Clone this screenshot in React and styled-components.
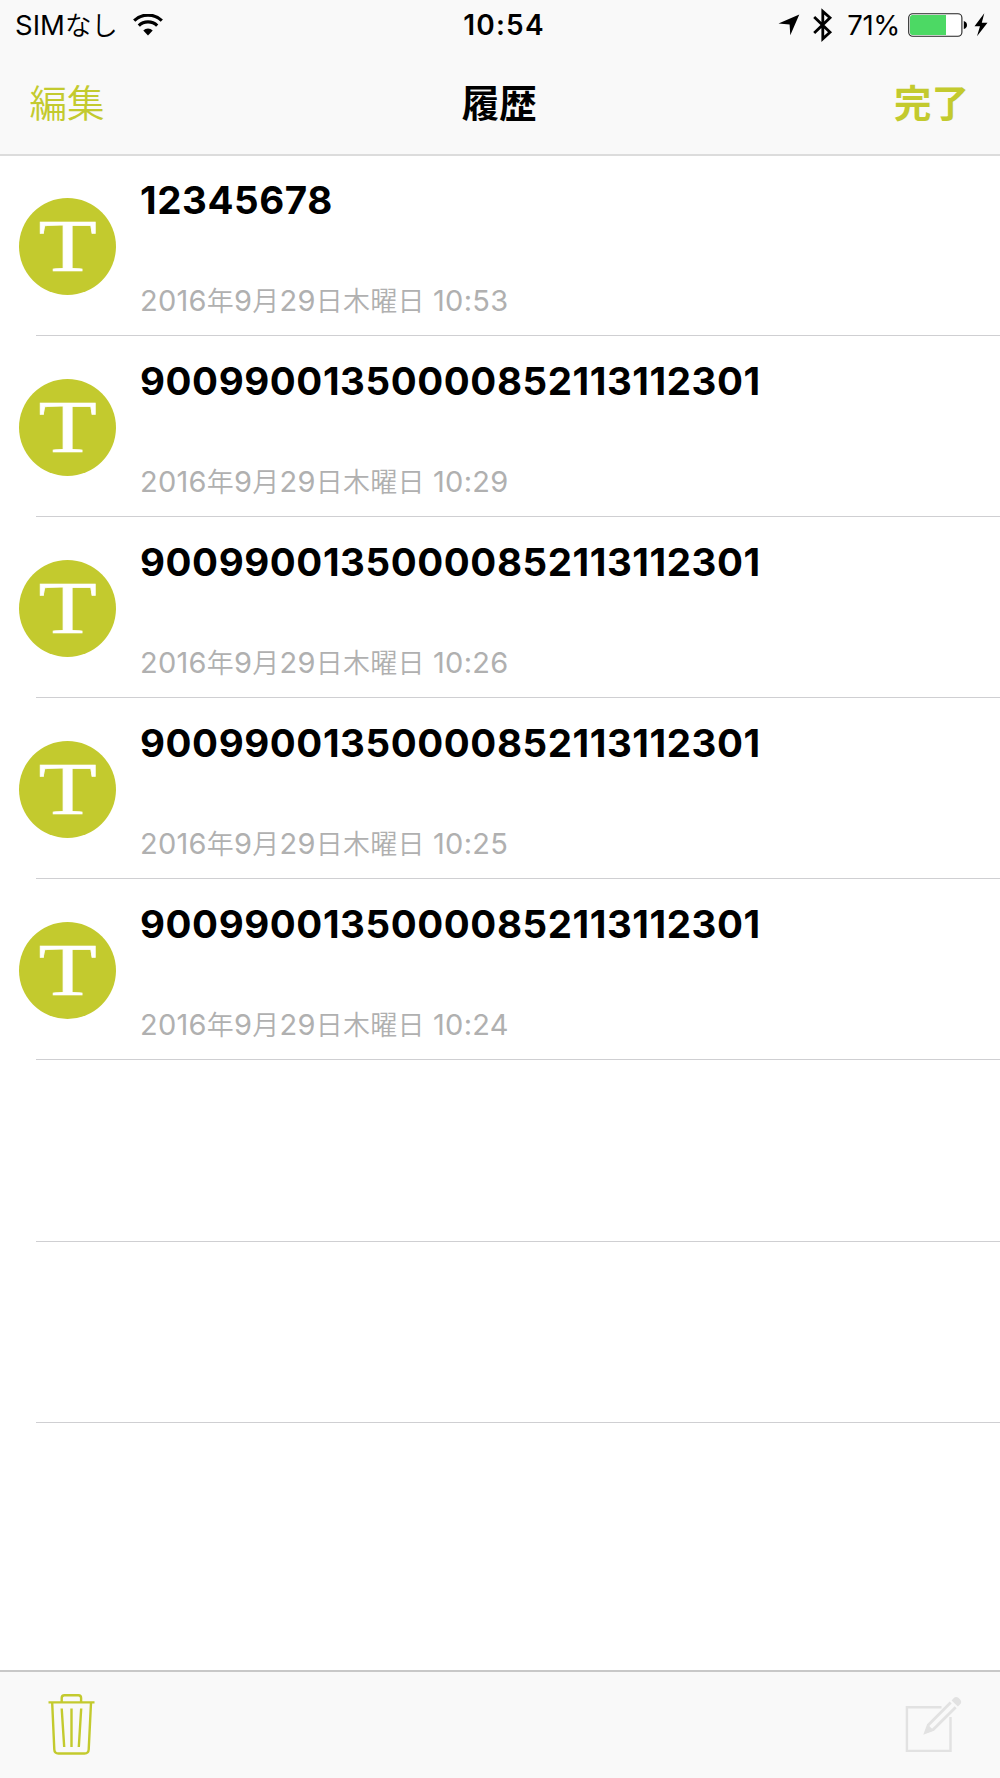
import styled, { createGlobalStyle } from "styled-components";

const history = [
  { id: 1, code: "12345678", time: "10:53" },
  { id: 2, code: "90099001350000852113112301", time: "10:29" },
  { id: 3, code: "90099001350000852113112301", time: "10:26" },
  { id: 4, code: "90099001350000852113112301", time: "10:25" },
  { id: 5, code: "90099001350000852113112301", time: "10:24" },
];

const WifiIcon = () => (
  <svg width="30" height="22" viewBox="0 0 30 22">
    <path d="M1.2 6.6a20 20 0 0 1 27.6 0" fill="none" stroke="#000" strokeWidth="3.2" />
    <path d="M5.8 11.6a13.3 13.3 0 0 1 18.4 0" fill="none" stroke="#000" strokeWidth="3.2" />
    <path d="M10.3 16.4a6.8 6.8 0 0 1 9.4 0L15 21.4z" />
  </svg>
);

const LocationIcon = () => (
  <svg width="22" height="22" viewBox="0 0 22 22">
    <path d="M21.3 .4L12.3 21.3L11.6 10.6L.5 9.6z" />
  </svg>
);

const BluetoothIcon = () => (
  <svg width="20" height="34" viewBox="0 0 20 34">
    <path
      d="M1.2 9L17 24.2L9.8 30.8V3.4L17 9.8L1.2 25"
      fill="none"
      stroke="#000"
      strokeWidth="2.8"
    />
  </svg>
);

const BatteryIcon = () => (
  <svg width="60" height="24" viewBox="0 0 60 24">
    <rect x=".7" y=".7" width="53.2" height="22.6" rx="4" fill="#fff" stroke="#222" strokeWidth="1.1" />
    <path d="M4.5 2H38v20H4.5a2.5 2.5 0 0 1-2.5-2.5v-15A2.5 2.5 0 0 1 4.5 2z" fill="#4cd964" />
    <path d="M55.8 8q3.2 1 3.2 4t-3.2 4z" />
  </svg>
);

const BoltIcon = () => (
  <svg width="14" height="24" viewBox="0 0 14 24">
    <path d="M10.3 .3L.5 13.3H6L3 23.3L13.5 9.7H7.8z" />
  </svg>
);

const TrashIcon = () => (
  <svg width="48" height="62" viewBox="0 0 48 62" fill="none" stroke="#c3ca2e" strokeWidth="2.4">
    <path d="M.5 9.4H46.5" />
    <path d="M13.7 9V5q0-2.7 2.7-2.7H30.4q2.7 0 2.7 2.7V9" />
    <path d="M4.2 10L6.3 56.5q.2 4 4.2 4H36.5q4 0 4.2-4L43 10" />
    <path d="M13.7 15.5L16.2 54M23.5 15.5V54M33.2 15.5L30.8 54" />
  </svg>
);

const ComposeIcon = () => (
  <svg width="58" height="62" viewBox="0 0 58 62">
    <path d="M36.5 14.2H1.9V57.9H45.5V24" fill="none" stroke="#e2e2e2" strokeWidth="2.4" />
    <path
      d="M45.7 9.6L23.3 32L20.6 39.4L28.3 36.6L50.7 14.2"
      fill="none"
      stroke="#e2e2e2"
      strokeWidth="2.8"
    />
    <path d="M19.7 40.2L22.6 31.4L28.9 37.4z" fill="#e2e2e2" />
    <path d="M46.6 7.4l2.2-2.4q2.3-2.2 4.8 0l1.5 1.5q2.2 2.5 0 4.8l-2.2 2.2z" fill="#e2e2e2" />
  </svg>
);

export default function App() {
  return (
    <>
      <GlobalStyle />
      <Screen>
        <Header>
          <StatusBar>
            <StatusLeft>
              <Carrier>
                SIM<Kana>なし</Kana>
              </Carrier>
              <WifiIcon />
            </StatusLeft>
            <Clock>10:54</Clock>
            <StatusRight>
              <LocationIcon />
              <BluetoothBox>
                <BluetoothIcon />
              </BluetoothBox>
              <Percent>71%</Percent>
              <BatteryIcon />
              <BoltBox>
                <BoltIcon />
              </BoltBox>
            </StatusRight>
          </StatusBar>
          <NavBar>
            <NavButton>編集</NavButton>
            <NavTitle>履歴</NavTitle>
            <NavButton $bold>完了</NavButton>
          </NavBar>
        </Header>
        <List>
          {history.map((item) => (
            <Row key={item.id}>
              <Badge>
                <Letter>T</Letter>
              </Badge>
              <RowBody>
                <Code>{item.code}</Code>
                <DateText>
                  2016<Kanji>年</Kanji>9<Kanji>月</Kanji>29<Kanji>日木曜日</Kanji> {item.time}
                </DateText>
              </RowBody>
            </Row>
          ))}
          <Row />
          <Row />
        </List>
        <Toolbar>
          <TrashIcon />
          <ComposeIcon />
        </Toolbar>
      </Screen>
    </>
  );
}

//Styled
const GlobalStyle = createGlobalStyle`
  * {
    box-sizing: border-box;
  }
  body {
    margin: 0;
    background: #fff;
    font-family: Inter, "Noto Sans CJK JP", sans-serif;
  }
  svg {
    display: block;
    flex-shrink: 0;
  }
`;
const Screen = styled.div`
  width: 1000px;
  height: 1778px;
  display: flex;
  flex-direction: column;
  overflow: hidden;
`;
const Header = styled.header`
  height: 156px;
  background: #f9f9f9;
  border-bottom: 2px solid #dcdcdc;
`;
const StatusBar = styled.div`
  height: 49px;
  display: grid;
  grid-template-columns: 1fr auto 1fr;
  align-items: center;
  padding: 0 12px 0 15px;
  font-size: 27.5px;
  color: #000;
`;
const StatusLeft = styled.div`
  display: flex;
  align-items: center;
  gap: 15px;
`;
const Carrier = styled.span`
  white-space: nowrap;
  line-height: 50px;
`;
const Kana = styled.span`
  font-size: 26.5px;
  font-weight: 350;
`;
const Clock = styled.span`
  margin-left: 5px;
  line-height: 50px;
  font-size: 28px;
  font-weight: 600;
  letter-spacing: 1.2px;
`;
const StatusRight = styled.div`
  display: flex;
  align-items: center;
  justify-content: flex-end;
`;
const BluetoothBox = styled.div`
  margin-left: 13px;
`;
const BoltBox = styled.div`
  margin-left: 6px;
`;
const Percent = styled.span`
  margin: 0 8px 0 14px;
  line-height: 50px;
  letter-spacing: -0.3px;
`;
const NavBar = styled.nav`
  height: 103px;
  display: grid;
  grid-template-columns: 1fr auto 1fr;
  align-items: center;
  padding: 0 31px 0 29.5px;
`;
const NavButton = styled.span`
  font-family: "Noto Sans CJK JP", sans-serif;
  font-size: 37.5px;
  line-height: 50px;
  font-weight: ${(props) => (props.$bold ? 700 : 350)};
  text-align: ${(props) => (props.$bold ? "right" : "left")};
  color: #c3ca2e;
`;
const NavTitle = styled.span`
  font-family: "Noto Sans CJK JP", sans-serif;
  font-size: 37.5px;
  line-height: 50px;
  font-weight: 700;
`;
const List = styled.main`
  flex: 1;
  margin-top: -1px;
`;
const Row = styled.div`
  height: 181.1px;
  margin-left: 36px;
  display: flex;
  border-bottom: 1px solid #cfcfd2;
`;
const Badge = styled.div`
  width: 97px;
  height: 97px;
  margin: 43px 24px 0 -17px;
  border-radius: 50%;
  background: #c3ca2e;
  display: flex;
  align-items: center;
  justify-content: center;
`;
const Letter = styled.span`
  font-family: "Liberation Serif", serif;
  font-size: 74px;
  line-height: 97px;
  color: #fff;
  transform: scaleX(1.29);
  -webkit-text-stroke: 0.6px #fff;
`;
const RowBody = styled.div`
  display: flex;
  flex-direction: column;
`;
const Code = styled.div`
  height: 50px;
  margin-top: 20px;
  line-height: 50px;
  font-size: 38.5px;
  font-weight: 700;
  letter-spacing: 0.58px;
  color: #000;
`;
const DateText = styled.div`
  height: 40px;
  margin-top: 55px;
  line-height: 40px;
  font-size: 29px;
  letter-spacing: 0.25px;
  white-space: nowrap;
  color: #b0b0b0;
`;
const Kanji = styled.span`
  font-family: "Noto Sans CJK JP", sans-serif;
  font-size: 27px;
  font-weight: 350;
`;
const Toolbar = styled.footer`
  height: 108px;
  display: flex;
  align-items: flex-start;
  justify-content: space-between;
  padding: 21px 37px 0 48px;
  background: #f9f9f9;
  border-top: 2px solid #c8c8c8;
`;
